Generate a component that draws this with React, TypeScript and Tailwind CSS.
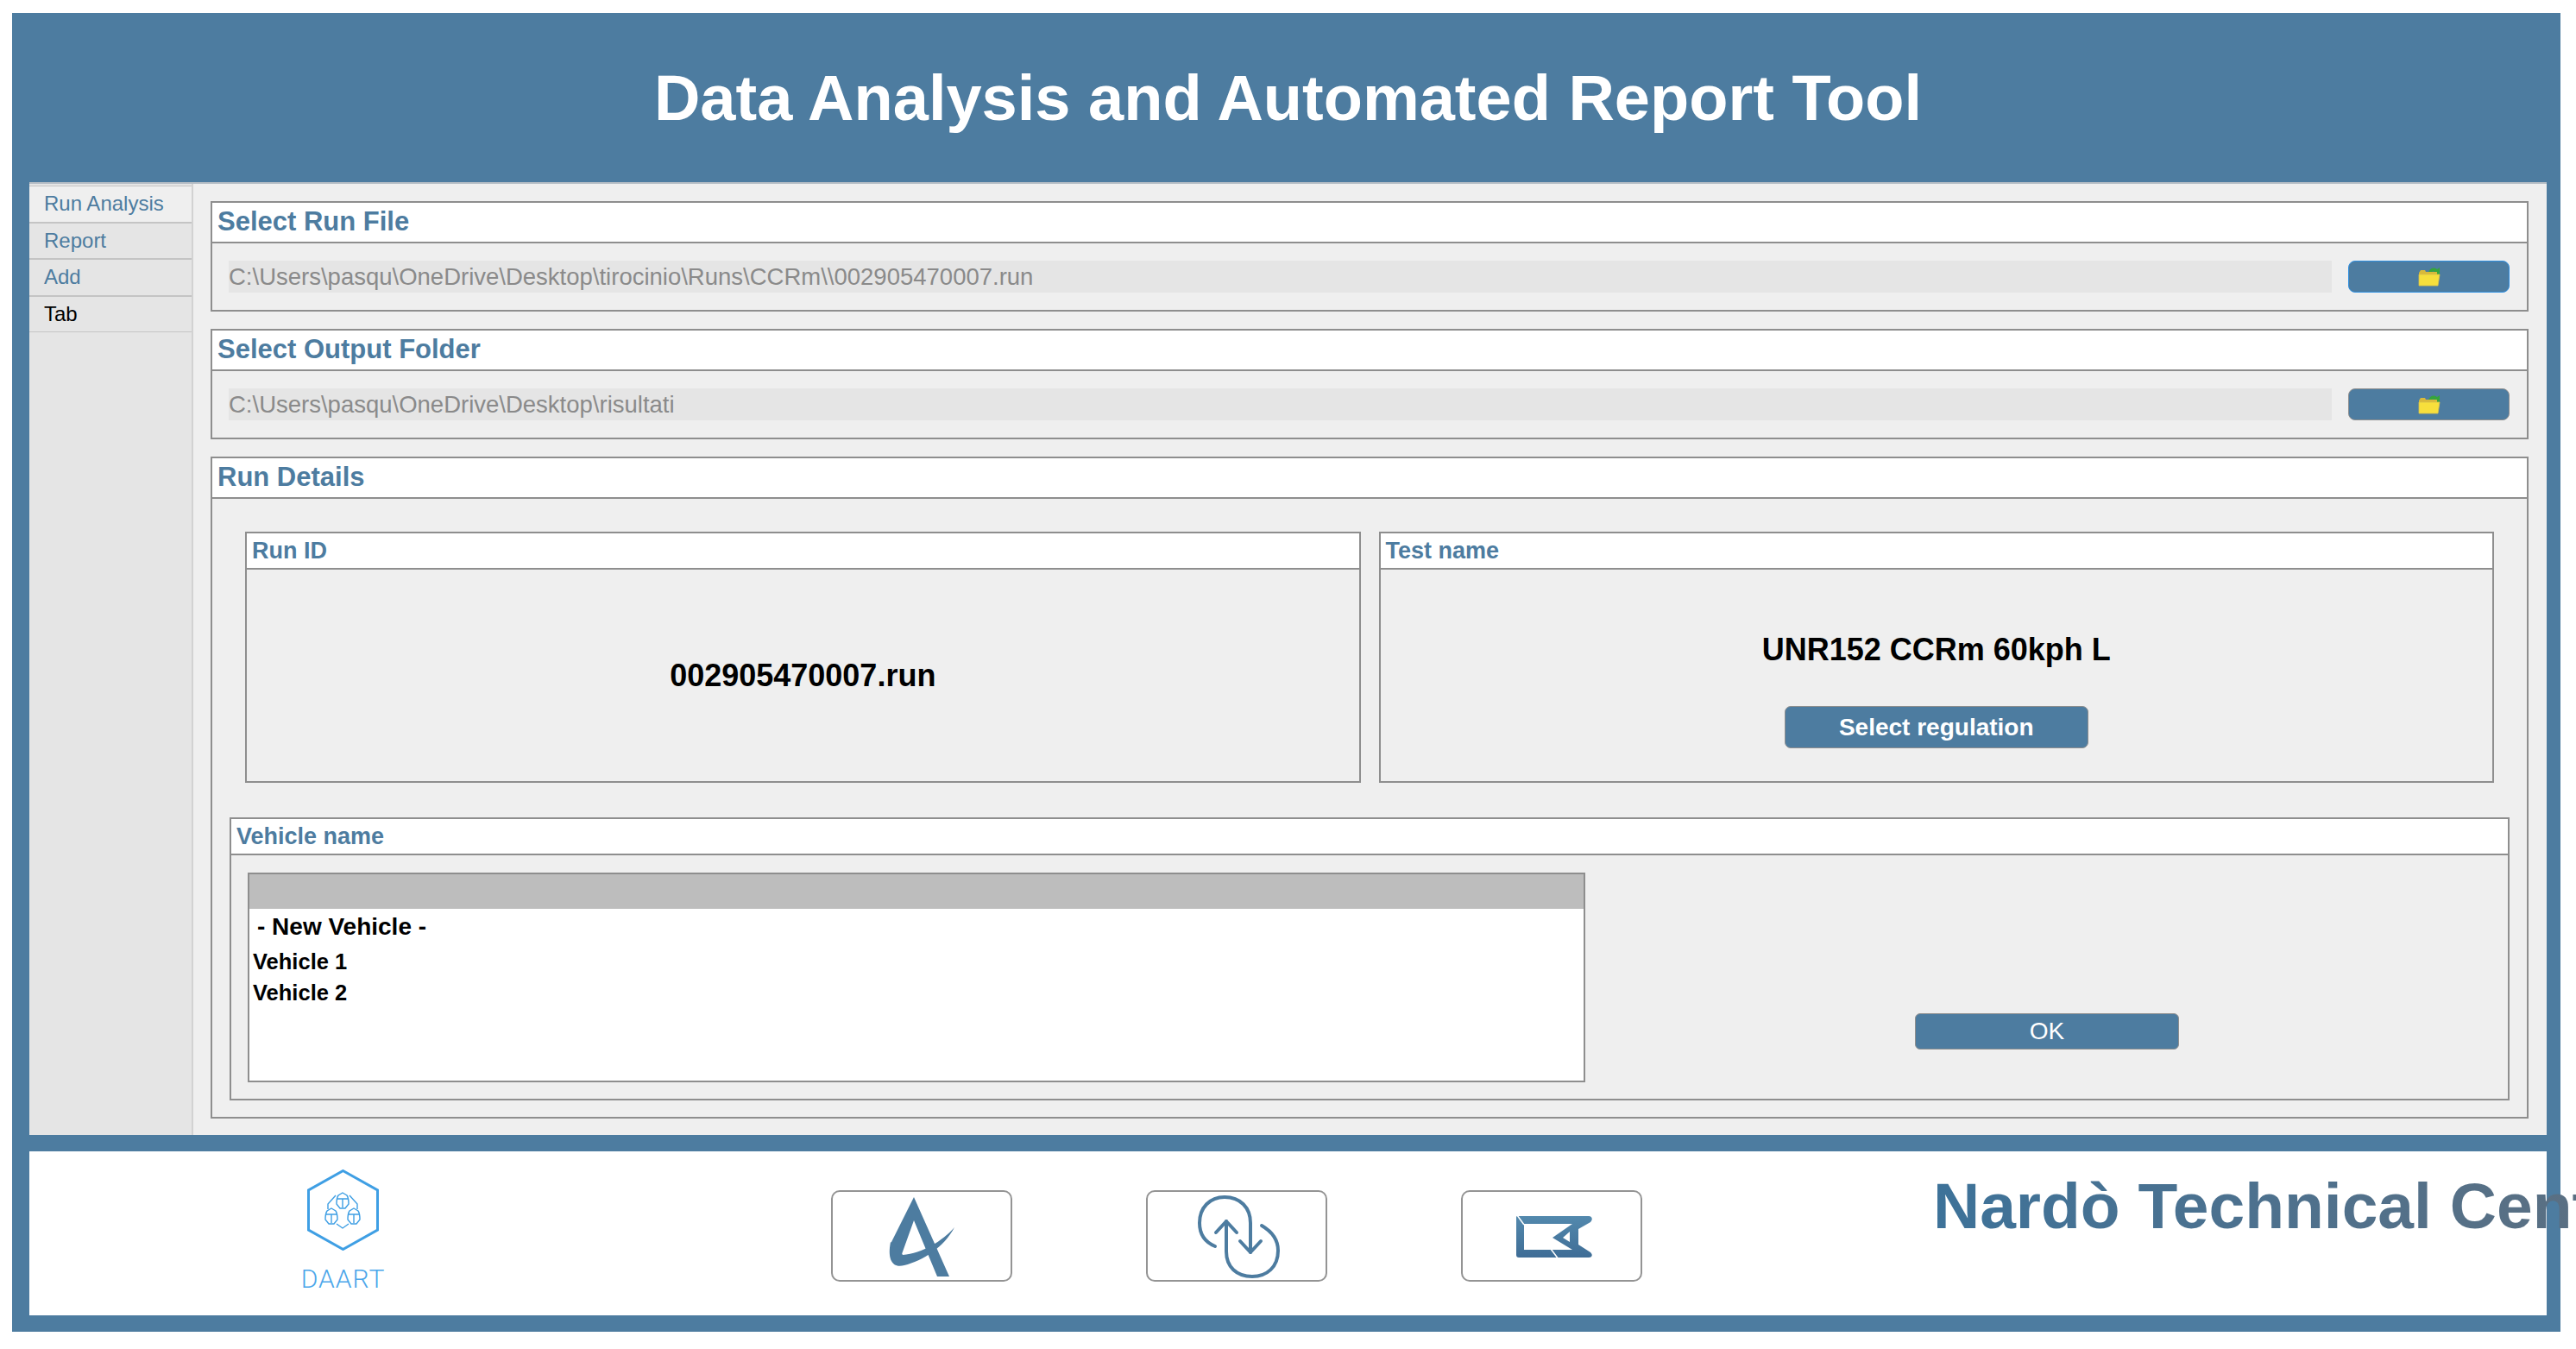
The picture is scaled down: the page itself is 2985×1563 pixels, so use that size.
import React from "react"

const sans = "font-['Liberation_Sans',Arial,sans-serif]"

function FolderIcon() {
  return (
    <svg width="26" height="23" viewBox="0 0 26 23">
      <path d="M12 7 C13 2 18 0 22 3 L25 1 L25 9 L18 9 L20 6 C18 5 15 5 14 8 Z" fill="#35a53c" />
      <path d="M1 7 L3 4 L8 4 L9 6 L22 6 L22 9 L1 9 Z" fill="#d9b93a" />
      <path d="M1 9 L25 9 L23 22 L1 22 Z" fill="#f7df3c" stroke="#d9c04a" strokeWidth="0.8" />
    </svg>
  )
}

function DaartLogo() {
  const scarab = (cx: number, cy: number) => (
    <g key={cx + "-" + cy} transform={`translate(${cx} ${cy})`}>
      <path d="M0 -9 L5 -6 C7 -3 7 2 7 4 L3 9 L-3 9 L-7 4 C-7 2 -7 -3 -5 -6 Z" />
      <path d="M-6 -2 L6 -2 M0 -2 L0 8" />
    </g>
  )
  return (
    <svg width="83" height="94" viewBox="0 0 83 94" fill="none" stroke="#3f9fe4">
      <path d="M41.5 1.5 L81.5 24 L81.5 70 L41.5 92.5 L1.5 70 L1.5 24 Z" strokeWidth="3" />
      <g strokeWidth="1.4">
        {scarab(41, 36)}
        {scarab(28, 54)}
        {scarab(54, 54)}
        <path d="M33 30 L24 40 L24 46 M49 30 L58 40 L58 46 M34 63 L41 68 L48 63" />
      </g>
    </svg>
  )
}

function BrandA() {
  return (
    <svg width="206" height="102" viewBox="0 0 206 102" fill="#4d7ca0">
      <path d="M94 6 L135 98 L121 98 L94 33 L80 72 L67 60 Z" />
      <path d="M67 58 C63 78 69 89 83 85 C104 80 129 64 141 41 C127 57 104 71 81 73 L77 66 Z" />
    </svg>
  )
}

function BrandArrows() {
  return (
    <svg width="206" height="102" viewBox="0 0 206 102" fill="none" stroke="#4d7ca0" strokeWidth="4" strokeLinecap="round" strokeLinejoin="round">
      <path d="M78 63 C66 58 60 48 60 36 C60 18 72 6 89 6 C107 6 119 18 119 36 L119 70" />
      <path d="M107 57 L119 70 L131 57" />
      <path d="M132 39 C144 46 151 56 151 68 C151 87 138 98 121 98 C103 98 91 87 91 69 L91 34" />
      <path d="M79 47 L91 34 L103 47" />
    </svg>
  )
}

function BrandTrack() {
  return (
    <svg width="206" height="102" viewBox="0 0 206 102">
      <defs>
        <linearGradient id="trackFill" x1="0" y1="0" x2="0" y2="1">
          <stop offset="0" stopColor="#5389ad" />
          <stop offset="1" stopColor="#3f6d96" />
        </linearGradient>
      </defs>
      <path
        fillRule="evenodd"
        fill="url(#trackFill)"
        d="M63 28 L146 28 C150 28 151 32 148 35 L134 43 L134 61 L148 70 C151 73 150 76 146 76 L65 76 C63 76 62 75 62 73 L62 30 C62 29 62 28 63 28 Z M71 37 L71 67 L127 67 L104 53 L127 37 Z M124 46 L116 53 L124 58 Z"
      />
      <path d="M63 27 L71 38 M102 66 L111 78" stroke="#ffffff" strokeWidth="1.5" />
    </svg>
  )
}

function Box({ title, big, className, bodyClass, children }: { title: string; big?: boolean; className?: string; bodyClass?: string; children?: React.ReactNode }) {
  return (
    <div className={`flex flex-col border-2 border-[#8e8e8e] ${className ?? ""}`}>
      <div className={`flex items-center bg-white border-b-2 border-[#8e8e8e] font-bold text-[#4d7ca0] ${big ? "h-[47px] pl-[6px] text-[31px]" : "h-[42px] pl-[6px] text-[27px]"}`}>
        {title}
      </div>
      <div className={`flex-1 ${bodyClass ?? ""}`}>{children}</div>
    </div>
  )
}

function PathRow({ title, path, focused }: { title: string; path: string; focused?: boolean }) {
  return (
    <Box title={title} big className="h-[128px]" bodyClass="flex items-center gap-[19px] pl-[19px] pr-[20px]">
      <div className="flex flex-1 h-[37px] items-center bg-[#e5e5e5] text-[27.5px] text-[#8a8a8a]">{path}</div>
      <button className={`flex h-[37px] w-[187px] items-center justify-center rounded-[8px] border bg-[#4d7ca0] ${focused ? "border-[#2f8fe0]" : "border-[#8e8e8e]"}`}>
        <FolderIcon />
      </button>
    </Box>
  )
}

function BrandButton({ children }: { children: React.ReactNode }) {
  return (
    <button className="flex h-[106px] w-[210px] items-center justify-center rounded-[10px] border-2 border-[#949494] bg-white">
      {children}
    </button>
  )
}

export default function App() {
  const tabs = [
    { label: "Run Analysis", active: true },
    { label: "Report" },
    { label: "Add" },
    { label: "Tab", dark: true },
  ]

  return (
    <div className={`h-[1563px] w-[2985px] overflow-hidden bg-white pt-[15px] pl-[14px] ${sans}`}>
      <div className="flex h-[1528px] w-[2953px] flex-col bg-[#4d7ca0] pl-[20px] pr-[16px]">
        <header className="flex h-[196px] shrink-0 items-center justify-center text-[74px] font-bold text-white">
          Data Analysis and Automated Report Tool
        </header>

        <div className="flex h-[1104px] shrink-0 border-t-2 border-[#b4bcc4] bg-[#efefef]">
          <nav className="flex w-[190px] shrink-0 flex-col border-r-2 border-[#d2d2d2] bg-[#e5e5e5] pt-[2px]">
            {tabs.map((t) => (
              <div
                key={t.label}
                className={`flex h-[42.5px] items-center border-y border-[#c4c4c4] pl-[17px] text-[24px] ${t.active ? "bg-[#efefef]" : ""} ${t.dark ? "text-black" : "text-[#4d7ca0]"}`}
              >
                {t.label}
              </div>
            ))}
          </nav>

          <main className="flex flex-1 flex-col gap-[20px] pt-[20px] pl-[20px] pr-[21px]">
            <PathRow focused title="Select Run File" path="C:\Users\pasqu\OneDrive\Desktop\tirocinio\Runs\CCRm\\002905470007.run" />
            <PathRow title="Select Output Folder" path="C:\Users\pasqu\OneDrive\Desktop\risultati" />

            <Box title="Run Details" big className="h-[767px]" bodyClass="flex flex-col gap-[40px] pt-[38px] px-[20px]">
              <div className="flex gap-[21px] px-[18px]">
                <Box title="Run ID" className="h-[291px] flex-1" bodyClass="flex items-center justify-center">
                  <span className="text-[36px] font-bold text-black">002905470007.run</span>
                </Box>
                <Box title="Test name" className="h-[291px] flex-1" bodyClass="flex flex-col items-center pt-[72px]">
                  <span className="text-[36px] font-bold leading-[42px] text-black">UNR152 CCRm 60kph L</span>
                  <button className="mt-[44px] flex h-[49px] w-[352px] items-center justify-center rounded-[7px] border border-[#8e8e8e] bg-[#4d7ca0] text-[28px] font-bold text-white">
                    Select regulation
                  </button>
                </Box>
              </div>

              <Box title="Vehicle name" className="h-[328px]" bodyClass="flex pt-[20px] pl-[19px]">
                <div className="flex h-[243px] w-[1550px] flex-col border-2 border-[#8e8e8e] bg-white text-black">
                  <div className="h-[40px] shrink-0 bg-[#bdbdbd]" />
                  <div className="mt-[4px] pl-[9px] text-[28px] font-bold leading-[34px]">- New Vehicle -</div>
                  <div className="mt-[5px] pl-[4px] text-[25.5px] font-bold leading-[36px]">Vehicle 1</div>
                  <div className="pl-[4px] text-[25.5px] font-bold leading-[37px]">Vehicle 2</div>
                </div>
                <div className="flex flex-1 items-start pt-[163px] pl-[382px]">
                  <button className="flex h-[42px] w-[306px] items-center justify-center rounded-[6px] border border-[#8e8e8e] bg-[#4d7ca0] text-[28px] text-white">
                    OK
                  </button>
                </div>
              </Box>
            </Box>
          </main>
        </div>

        <footer className="mt-[19px] flex h-[190px] shrink-0 bg-white">
          <div className="ml-[322px] flex w-[83px] flex-col items-center pt-[21px]">
            <DaartLogo />
            <span className="mt-[18px] font-['Roboto',sans-serif] text-[30px] font-light leading-[30px] tracking-[1px] text-[#4ba6ea]">DAART</span>
          </div>
          <div className="ml-[524px] flex gap-[155px] pt-[45px]">
            <BrandButton><BrandA /></BrandButton>
            <BrandButton><BrandArrows /></BrandButton>
            <BrandButton><BrandTrack /></BrandButton>
          </div>
          <div className="ml-[337px] whitespace-nowrap bg-gradient-to-r from-[#3d7299] to-[#5d6f80] bg-clip-text pt-[20px] font-['Liberation_Sans_Narrow','Liberation_Sans',sans-serif] text-[75px] font-bold leading-[86px] text-transparent">
            Nardò Technical Center
          </div>
        </footer>
      </div>
    </div>
  )
}
